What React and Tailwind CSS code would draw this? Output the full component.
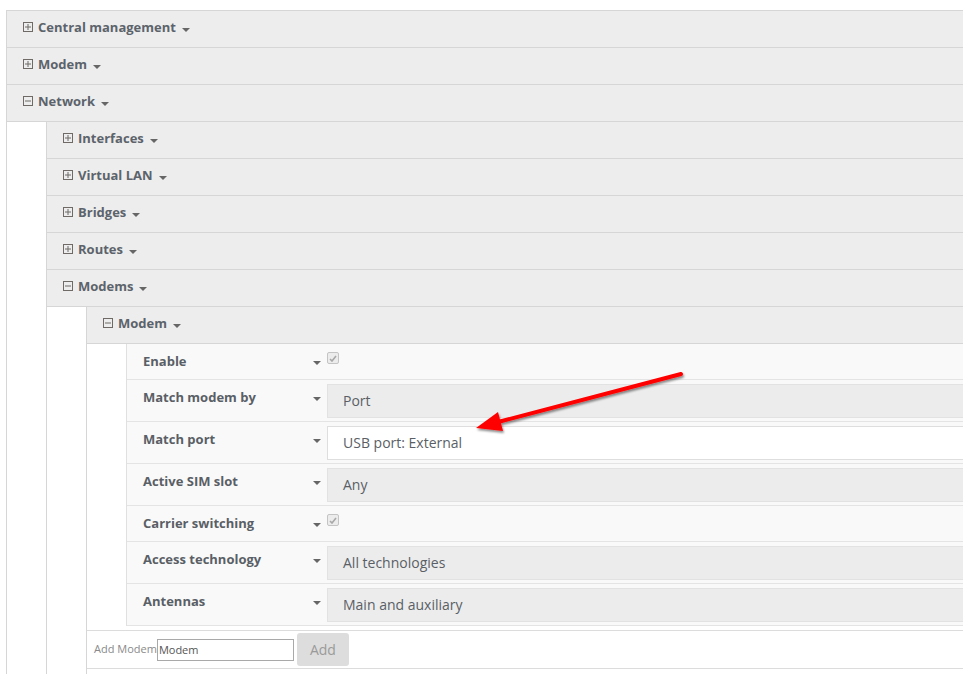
import React from 'react';

const BoxIcon = ({ open }) => (
    <svg width="10" height="10" viewBox="0 0 10 10" className="mt-[4px] shrink-0">
        <rect x="0.5" y="0.5" width="9" height="9" fill="none" stroke="#6f6a66" strokeWidth="1" />
        <line x1="2" y1="5" x2="8" y2="5" stroke="#6f6a66" strokeWidth="1" />
        {!open && <line x1="5" y1="2" x2="5" y2="8" stroke="#6f6a66" strokeWidth="1" />}
    </svg>
);

const Caret = ({ className = '' }) => (
    <svg width="8" height="4" viewBox="0 0 8 4" className={className}>
        <polygon points="0,0 8,0 4,4" fill="#666" />
    </svg>
);

const Header = ({ label, open }) => (
    <div className="flex h-[37px] items-start border-b border-[#d6d6d6] bg-[#ededed] pl-[16px] pt-[7px]">
        <BoxIcon open={open} />
        <span className="ml-[5px] text-[13px] font-bold leading-[18px] text-[#5c636b]">{label}</span>
        <Caret className="ml-[6px] mt-[10px]" />
    </div>
);

const Checkbox = () => (
    <div className="mt-[8px] flex h-[12px] w-[12px] items-center justify-center rounded-[2px] border border-[#c4c4c4] bg-[#ececec]">
        <svg width="8" height="7" viewBox="0 0 8 7">
            <path d="M1 4 L3 6 L7 1" fill="none" stroke="#a8a8a8" strokeWidth="1.6" />
        </svg>
    </div>
);

const rows = [
    { label: 'Enable', check: true },
    { label: 'Match modem by', value: 'Port' },
    { label: 'Match port', value: 'USB port: External', white: true },
    { label: 'Active SIM slot', value: 'Any' },
    { label: 'Carrier switching', check: true },
    { label: 'Access technology', value: 'All technologies' },
    { label: 'Antennas', value: 'Main and auxiliary' },
];

const FormRow = ({ row }) => (
    <div
        className={`grid grid-cols-[179px_21px_1fr] border-b border-[#e4e4e4] ${
            row.check ? 'h-[36px]' : 'h-[42px] pt-[4px] pb-[3px]'
        }`}
    >
        <div className={`pl-[16px] text-[13px] font-bold leading-[18px] text-[#5a5f66] ${row.check ? 'pt-[8px]' : 'pt-[4px]'}`}>
            {row.label}
        </div>
        <div className={`pl-[7px] ${row.check ? 'pt-[17px]' : 'pt-[13px]'}`}>
            <Caret />
        </div>
        <div>
            {row.check ? (
                <Checkbox />
            ) : (
                <div
                    className={`flex h-[34px] items-center border pb-[1px] pl-[15px] text-[14px] text-[#5a5f66] ${
                        row.white ? 'border-[#dedede] bg-white' : 'border-[#e2e2e2] bg-[#ececec]'
                    }`}
                >
                    {row.value}
                </div>
            )}
        </div>
    </div>
);

const App = () => {
    return (
        <div className="relative h-[674px] w-[963px] overflow-hidden bg-white font-['Open_Sans',sans-serif]">
            <div className="ml-[6px] mt-[10px] w-[980px] border-l border-t border-[#d6d6d6]">
                <Header label="Central management" />
                <Header label="Modem" />
                <Header label="Network" open />

                <div className="pl-[39px]">
                    <div className="border-l border-[#d6d6d6]">
                        <Header label="Interfaces" />
                        <Header label="Virtual LAN" />
                        <Header label="Bridges" />
                        <Header label="Routes" />
                        <Header label="Modems" open />

                        <div className="pl-[39px]">
                            <div className="border-l border-[#d6d6d6] pb-[20px]">
                                <Header label="Modem" open />

                                {/* Modem settings */}
                                <div className="pl-[39px]">
                                    <div className="border-l border-[#e0e0e0] bg-[#f9f9f9]">
                                        {rows.map((row) => (
                                            <FormRow key={row.label} row={row} />
                                        ))}
                                    </div>
                                </div>

                                {/* Add section */}
                                <div className="mt-[4px] flex h-[39px] items-center border-t border-b border-[#dcdcdc] pl-[7px]">
                                    <span className="text-[11px] text-[#8a8a8a]">Add Modem</span>
                                    <input
                                        readOnly
                                        value="Modem"
                                        className="h-[22px] w-[137px] border border-[#a9a9a9] bg-white pl-[1px] text-[11px] text-[#555] outline-none"
                                    />
                                    <button className="ml-[3px] h-[33px] w-[52px] rounded-[3px] bg-[#dddddd] text-[14px] text-[#9a9a9a]">
                                        Add
                                    </button>
                                </div>
                            </div>
                        </div>
                    </div>
                </div>
            </div>

            {/* Annotation arrow */}
            <svg className="pointer-events-none absolute left-0 top-0" width="963" height="674">
                <defs>
                    <filter id="sh" x="-20%" y="-50%" width="140%" height="200%">
                        <feDropShadow dx="1" dy="2" stdDeviation="1.2" floodColor="#000" floodOpacity="0.45" />
                    </filter>
                </defs>
                <g filter="url(#sh)">
                    <line x1="681" y1="374" x2="498" y2="422" stroke="#f00" strokeWidth="4" strokeLinecap="round" />
                    <polygon points="476,428 503,431 498,412" fill="#f00" />
                </g>
            </svg>
        </div>
    );
};

export default App;
